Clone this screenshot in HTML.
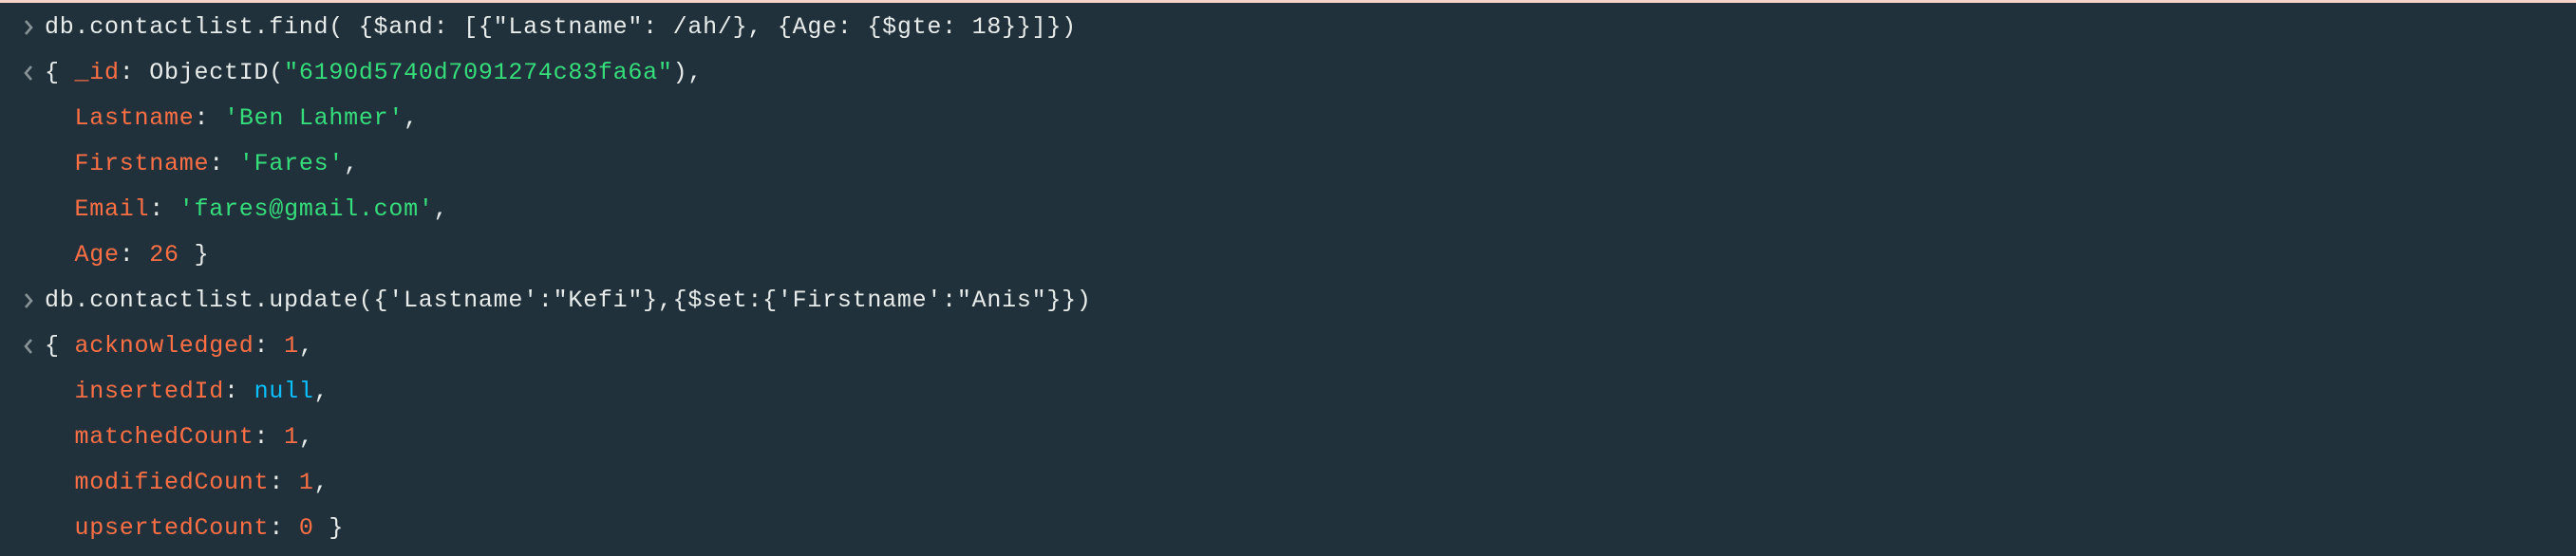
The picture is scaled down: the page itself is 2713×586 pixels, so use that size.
<!DOCTYPE html>
<html><head><meta charset="utf-8"><style>
html,body{margin:0;padding:0;}
body{width:2713px;height:586px;background:#21313c;overflow:hidden;position:relative;border-top:3px solid #f5d3c6;box-sizing:border-box;}
.l{position:absolute;left:47px;height:48px;line-height:48px;font-family:"Liberation Mono",monospace;font-size:25px;letter-spacing:0.75px;color:#e8edeb;white-space:pre;}
.k{color:#ff6f44}.s{color:#35de7b}.n{color:#0ac0ff}
.c{position:absolute;left:22px;width:16px;height:48px;}
</style></head><body>
<svg class="c" style="top:2px" viewBox="0 0 16 48"><path d="M5 17 L11 24 L5 31" stroke="#889397" stroke-width="2.6" fill="none"/></svg>
<div class="l" style="top:2px">db.contactlist.find( {$and: [{"Lastname": /ah/}, {Age: {$gte: 18}}]})</div>
<svg class="c" style="top:50px" viewBox="0 0 16 48"><path d="M11 17 L5 24 L11 31" stroke="#889397" stroke-width="2.6" fill="none"/></svg>
<div class="l" style="top:50px">{ <span class="k">_id</span>: ObjectID(<span class="s">"6190d5740d7091274c83fa6a"</span>),</div>
<div class="l" style="top:98px">  <span class="k">Lastname</span>: <span class="s">'Ben Lahmer'</span>,</div>
<div class="l" style="top:146px">  <span class="k">Firstname</span>: <span class="s">'Fares'</span>,</div>
<div class="l" style="top:194px">  <span class="k">Email</span>: <span class="s">'fares@gmail.com'</span>,</div>
<div class="l" style="top:242px">  <span class="k">Age</span>: <span class="k">26</span> }</div>
<svg class="c" style="top:290px" viewBox="0 0 16 48"><path d="M5 17 L11 24 L5 31" stroke="#889397" stroke-width="2.6" fill="none"/></svg>
<div class="l" style="top:290px">db.contactlist.update({'Lastname':"Kefi"},{$set:{'Firstname':"Anis"}})</div>
<svg class="c" style="top:338px" viewBox="0 0 16 48"><path d="M11 17 L5 24 L11 31" stroke="#889397" stroke-width="2.6" fill="none"/></svg>
<div class="l" style="top:338px">{ <span class="k">acknowledged</span>: <span class="k">1</span>,</div>
<div class="l" style="top:386px">  <span class="k">insertedId</span>: <span class="n">null</span>,</div>
<div class="l" style="top:434px">  <span class="k">matchedCount</span>: <span class="k">1</span>,</div>
<div class="l" style="top:482px">  <span class="k">modifiedCount</span>: <span class="k">1</span>,</div>
<div class="l" style="top:530px">  <span class="k">upsertedCount</span>: <span class="k">0</span> }</div>
</body></html>
